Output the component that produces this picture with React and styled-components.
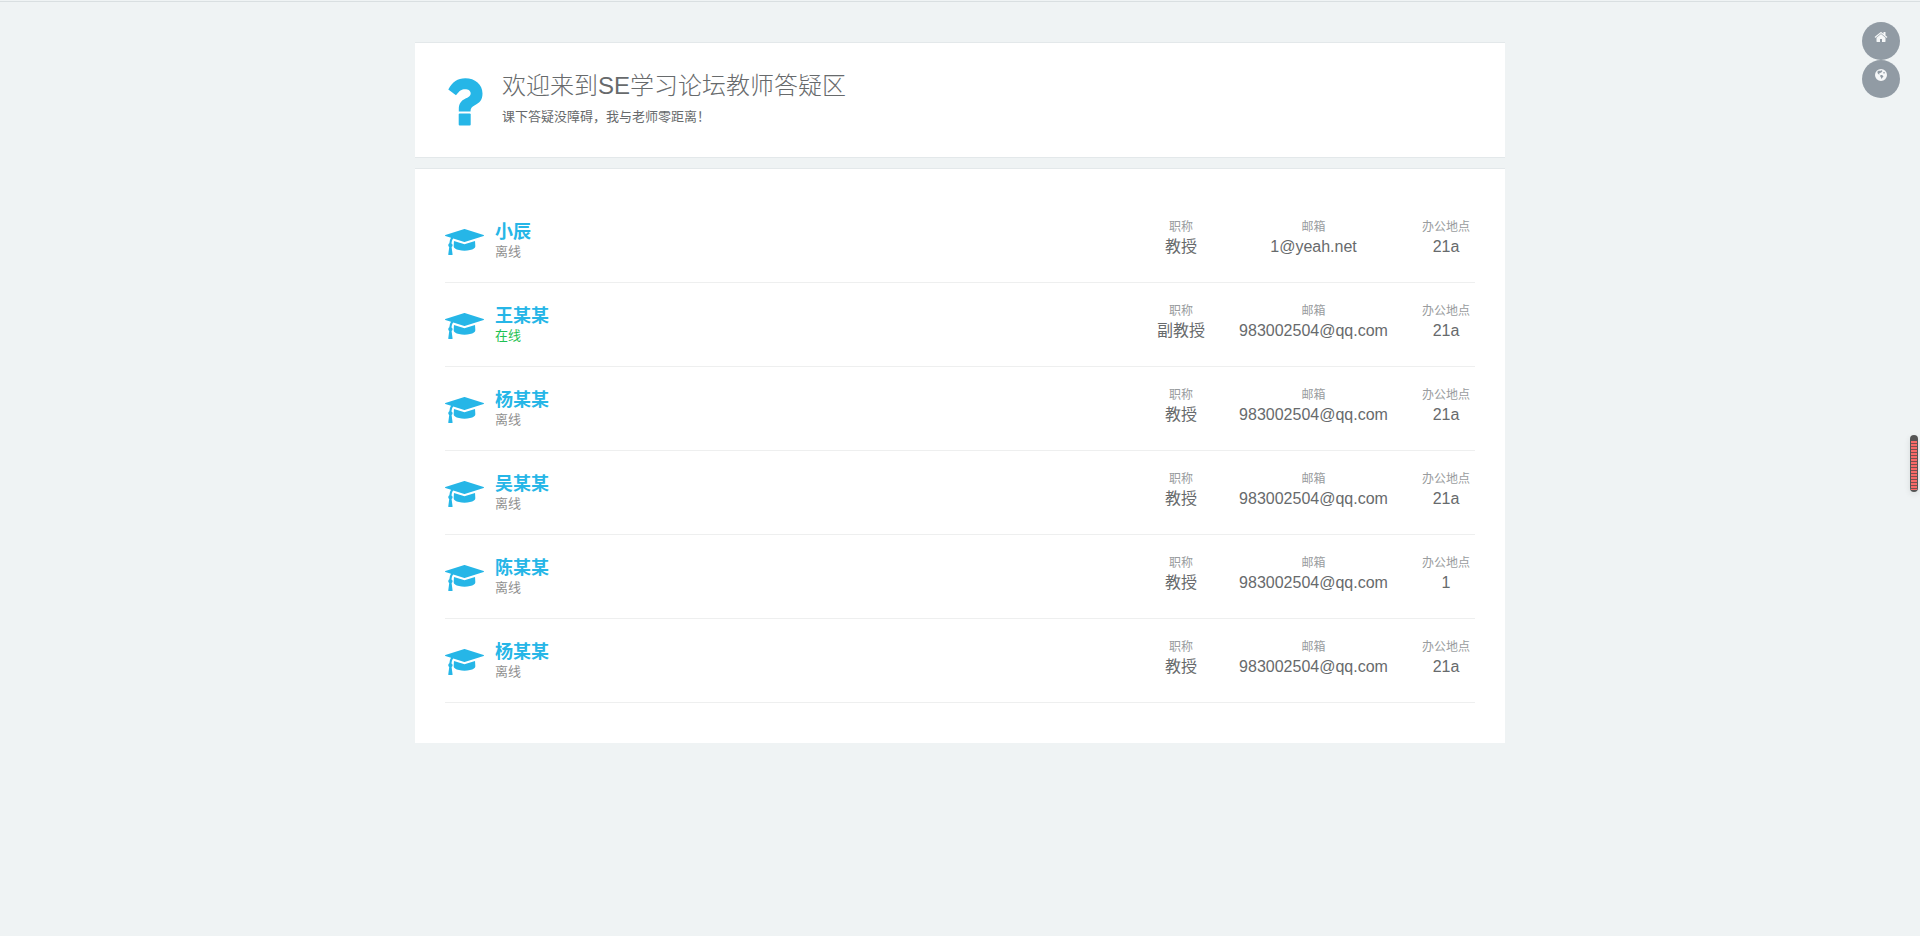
import React from "react";
import styled, { createGlobalStyle } from "styled-components";

const teachers = [
  { name: "小辰", online: false, title: "教授", email: "1@yeah.net", office: "21a" },
  { name: "王某某", online: true, title: "副教授", email: "983002504@qq.com", office: "21a" },
  { name: "杨某某", online: false, title: "教授", email: "983002504@qq.com", office: "21a" },
  { name: "吴某某", online: false, title: "教授", email: "983002504@qq.com", office: "21a" },
  { name: "陈某某", online: false, title: "教授", email: "983002504@qq.com", office: "1" },
  { name: "杨某某", online: false, title: "教授", email: "983002504@qq.com", office: "21a" },
];

const QuestionIcon = () => (
  <svg width="35" height="48" viewBox="0 0 35 48" aria-hidden="true">
    <path d="M.3 11.500C4.500 4 9.500 .3 17.300 .3C27 .3 34.500 6.500 34.500 15.500C34.500 22 31.500 24.800 26.800 27.300C23.700 28.900 22.500 30.600 22.500 33.400H10.800V31C10.800 26 13 22.700 17.500 20.500C21 19 22.700 17.800 22.700 15.500C22.700 12.800 20.300 11.300 17 11.300C13.500 11.300 11.500 12.800 8 17.300Z" />
    <rect x="10.700" y="35.500" width="12" height="12" rx="1" />
  </svg>
);

const CapIcon = () => (
  <svg width="39" height="26" viewBox="0 128 2304 1536" aria-hidden="true">
    <path d="M1774 836l18 316q4 69-82 128t-235 93.500-323 34.500-323-34.500-235-93.500-82-128l18-316 574 181q22 7 48 7t48-7zm530-324q0 23-22 31l-1120 352q-4 1-10 1t-10-1l-652-206q-43 34-71 111.500t-34 178.500q63 36 63 109 0 69-58 107l58 433q2 14-8 25-9 11-24 11h-192q-15 0-24-11-10-11-8-25l58-433q-58-38-58-107 0-73 65-111 11-207 98-330l-333-104q-22-8-22-31t22-31l1120-352q4-1 10-1t10 1l1120 352q22 8 22 31z" />
  </svg>
);

const HomeIcon = () => (
  <svg width="14" height="14" viewBox="0 0 1792 1792" aria-hidden="true">
    <path d="M1472 992v480q0 26-19 45t-45 19h-384v-384h-256v384h-384q-26 0-45-19t-19-45v-480q0-1 .5-3t.5-3l575-474 575 474q1 2 1 6zm223-69l-62 74q-8 9-21 11h-3q-13 0-21-7l-692-577-692 577q-12 8-24 7-13-2-21-11l-62-74q-8-10-7-23.500t11-21.500l719-599q32-26 76-26t76 26l244 204v-195q0-14 9-23t23-9h192q14 0 23 9t9 23v408l219 182q10 8 11 21.500t-7 23.500z" />
  </svg>
);

const GlobeIcon = () => (
  <svg width="14" height="14" viewBox="0 0 14 14" aria-hidden="true">
    <path fillRule="evenodd" d="M7 1a6 6 0 1 1 0 12a6 6 0 0 1 0-12zM3.500 3.500L5 2.500L6 3L7.500 2.200L8.500 3L7.500 4.200L6.200 5L5 5.500L5.800 6.500L4.500 6.200L3.500 5zM9 4.500L10.500 4L11 5.200L9.500 5.500zM6.500 7L8 7L9.500 8.200L8.500 9.500L7.500 11L7 9.500L6.200 8.200z" />
  </svg>
);

function Teacher({ teacher }) {
  return (
    <Row>
      <CapIcon />
      <Person>
        <Name href="#">{teacher.name}</Name>
        <Status $online={teacher.online}>{teacher.online ? "在线" : "离线"}</Status>
      </Person>
      <Details>
        <Detail>
          <dt>职称</dt>
          <dd>{teacher.title}</dd>
        </Detail>
        <Detail $wide>
          <dt>邮箱</dt>
          <dd>{teacher.email}</dd>
        </Detail>
        <Detail>
          <dt>办公地点</dt>
          <dd>{teacher.office}</dd>
        </Detail>
      </Details>
    </Row>
  );
}

function App() {
  return (
    <>
      <GlobalStyle />
      <TopLine />
      <Page>
        <Container>
          <Welcome>
            <QuestionIcon />
            <div>
              <h1>欢迎来到SE学习论坛教师答疑区</h1>
              <p>课下答疑没障碍，我与老师零距离！</p>
            </div>
          </Welcome>
          <List>
            {teachers.map((teacher, i) => (
              <Teacher key={i} teacher={teacher} />
            ))}
          </List>
        </Container>
      </Page>
      <QuickLinks aria-label="快捷导航">
        <RoundLink href="#" aria-label="首页">
          <HomeIcon />
        </RoundLink>
        <RoundLink href="#" aria-label="论坛">
          <GlobeIcon />
        </RoundLink>
      </QuickLinks>
      <ScrollThumb />
    </>
  );
}

export default App;

const GlobalStyle = createGlobalStyle`
  * {
    box-sizing: border-box;
  }
  body {
    margin: 0;
    background: #eff3f4;
    color: #676a6c;
    font-family: "Liberation Sans", "Noto Sans CJK SC", sans-serif;
    font-size: 13px;
  }
`;

const TopLine = styled.div`
  height: 2px;
  border-bottom: 1px solid #d9dfe1;
`;

const Page = styled.main`
  padding: 40px 24px;
`;

const Container = styled.div`
  max-width: 1090px;
  margin: 0 auto;
`;

const Welcome = styled.header`
  display: flex;
  align-items: flex-start;
  gap: 19px;
  min-height: 116px;
  padding: 25px 33px;
  background: #fff;
  border-top: 1px solid #e3e8ea;
  border-bottom: 1px solid #e3e8ea;
  svg {
    flex: none;
    margin-top: 10px;
    fill: #26b6e7;
  }
  h1 {
    margin: 0;
    font-size: 24px;
    font-weight: 300;
    line-height: 36px;
  }
  p {
    margin: 3px 0 0;
    line-height: 20px;
  }
`;

const List = styled.ul`
  list-style: none;
  margin: 10px 0 0;
  padding: 30px 30px 40px;
  background: #fff;
  border-top: 1px solid #e3e8ea;
`;

const Row = styled.li`
  display: flex;
  align-items: flex-start;
  gap: 11px;
  height: 84px;
  padding-top: 21px;
  border-bottom: 1px solid #eeefef;
  svg {
    flex: none;
    margin-top: 9px;
    fill: #26b6e7;
  }
`;

const Person = styled.div`
  flex: 1;
  display: flex;
  flex-direction: column;
  align-items: flex-start;
`;

const Name = styled.a`
  color: #26b6e7;
  font-size: 18px;
  font-weight: 700;
  line-height: 24px;
  text-decoration: none;
`;

const Status = styled.span`
  color: ${(props) => (props.$online ? "#1fc152" : "#909090")};
  line-height: 16px;
`;

const Details = styled.dl`
  display: flex;
  gap: 21px;
  margin: 0;
`;

const Detail = styled.div`
  width: ${(props) => (props.$wide ? "165px" : "58px")};
  text-align: center;
  white-space: nowrap;
  dt {
    color: #999c9e;
    font-size: 12px;
    line-height: 14px;
  }
  dd {
    margin: 0;
    font-size: 16px;
    line-height: 26px;
  }
`;

const QuickLinks = styled.nav`
  position: fixed;
  top: 22px;
  right: 20px;
`;

const RoundLink = styled.a`
  display: flex;
  justify-content: center;
  width: 38px;
  height: 38px;
  padding-top: 8px;
  border-radius: 50%;
  background: #919ba4;
  svg {
    fill: #f5f7f8;
  }
`;

const ScrollThumb = styled.div`
  position: fixed;
  top: 435px;
  right: 2px;
  width: 8px;
  height: 57px;
  padding: 6px 1px 2px;
  border-radius: 4px;
  background: #555;
  box-shadow: 0 2px 6px rgba(0, 0, 0, 0.1);
  &::before {
    content: "";
    display: block;
    height: 100%;
    background: repeating-linear-gradient(#f76a68 0 2px, #7d4f4f 2px 3px);
  }
`;
